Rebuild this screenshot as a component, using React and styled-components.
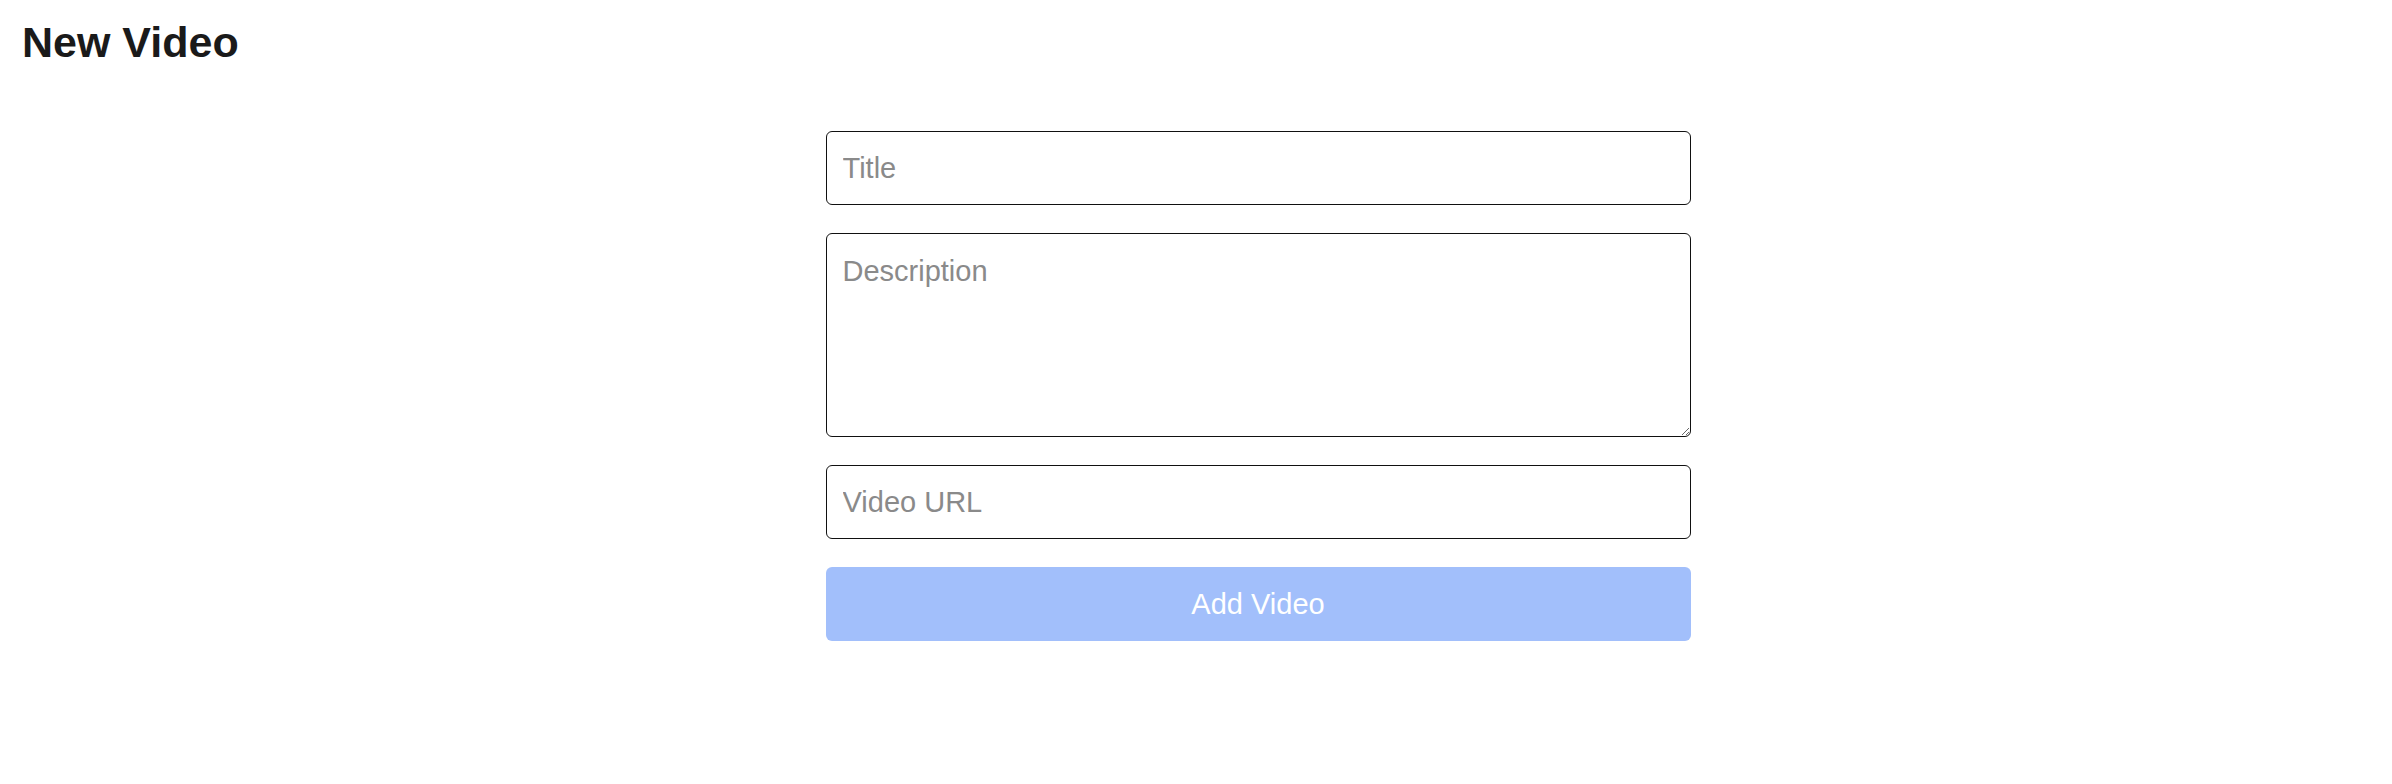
import React from "react";
import styled, { createGlobalStyle } from "styled-components";

const GlobalStyle = createGlobalStyle`
	body {
		margin: 0;
		background: #ffffff;
		font-family: "Liberation Sans", Arial, sans-serif;
	}
`;

const Page = styled.div`
	padding: 18px 22px 0;
`;

const Heading = styled.h1`
	margin: 0;
	font-size: 43px;
	font-weight: 700;
	line-height: normal;
	color: #1a1a1a;
`;

const FormRow = styled.div`
	display: flex;
	justify-content: center;
	padding-left: 124px;
	margin-top: 64px;
`;

const Form = styled.form`
	display: flex;
	flex-direction: column;
	gap: 28px;
	width: 865px;
`;

const fieldBase = `
	box-sizing: border-box;
	width: 100%;
	border: 1.5px solid #111;
	border-radius: 6px;
	background: #fff;
	font-family: "Liberation Sans", Arial, sans-serif;
	font-size: 29px;
	color: #1a1a1a;
	outline: none;
	&::placeholder {
		color: #8a8a8a;
	}
`;

const Input = styled.input`
	${fieldBase}
	height: 74px;
	padding: 0 16px;
`;

const TextArea = styled.textarea`
	${fieldBase}
	height: 204px;
	padding: 21px 16px;
	resize: vertical;
`;

const SubmitButton = styled.button`
	height: 74px;
	border: none;
	border-radius: 6px;
	background: ${(props) => (props.disabled ? "#a2bffb" : "#3b82f6")};
	color: #ffffff;
	font-family: "Liberation Sans", Arial, sans-serif;
	font-size: 29px;
	cursor: pointer;
`;

const App = () => {
	return (
		<Page>
			<GlobalStyle />
			<Heading>New Video</Heading>
			<FormRow>
				<Form onSubmit={(e) => e.preventDefault()}>
					<Input placeholder="Title" />
					<TextArea placeholder="Description" />
					<Input placeholder="Video URL" />
					<SubmitButton type="submit" disabled>
						Add Video
					</SubmitButton>
				</Form>
			</FormRow>
		</Page>
	);
};

export default App;
